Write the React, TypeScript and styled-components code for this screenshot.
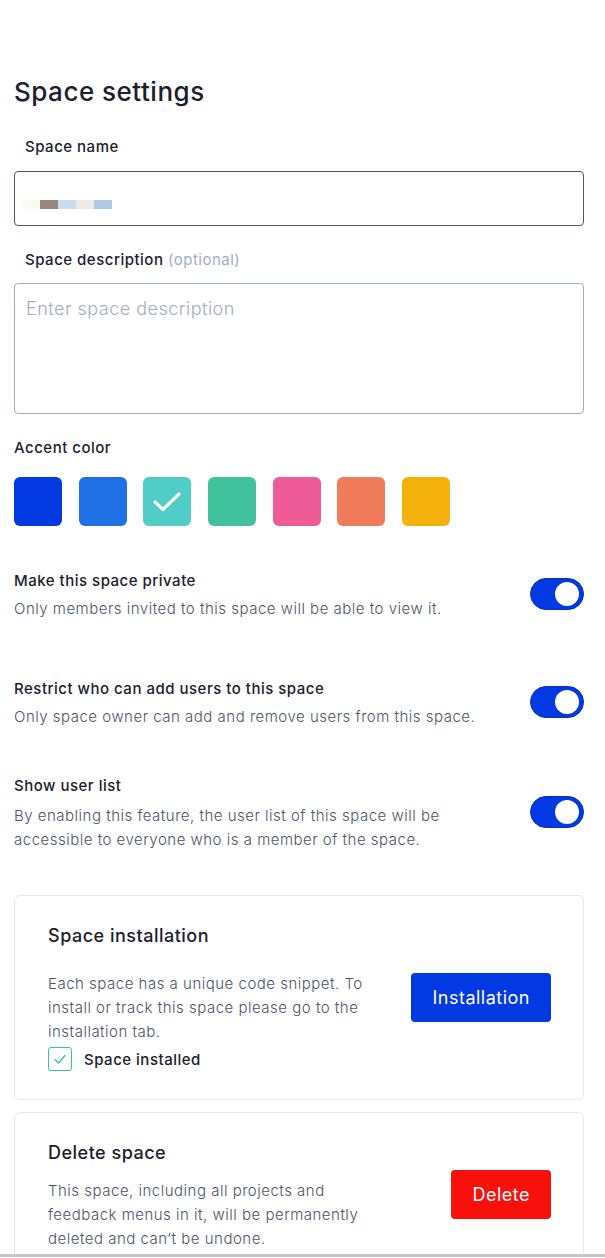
import React from "react";
import styled, { createGlobalStyle } from "styled-components";

const GlobalStyle = createGlobalStyle`
  html, body {
    margin: 0;
    padding: 0;
    background: #fff;
  }
  body {
    font-family: Inter, "Noto Sans", "Liberation Sans", sans-serif;
    color: #1a202c;
    letter-spacing: 0.5px;
  }
  * {
    box-sizing: border-box;
  }
`;

const Page = styled.div`
  display: flex;
  flex-direction: column;
  padding: 76px 21px 0 14px;
`;

const PageTitle = styled.h1`
  margin: 0;
  font-size: 26px;
  line-height: 31px;
  font-weight: 500;
  color: #1a202c;
`;

const Label = styled.div<{ $top: number; $indent?: boolean }>`
  margin-top: ${({ $top }) => $top}px;
  padding-left: ${({ $indent }) => ($indent ? "11px" : "0")};
  font-size: 15px;
  line-height: 20px;
  font-weight: 500;
  color: #1a202c;
`;

const Optional = styled.span`
  font-weight: 400;
  color: #a0aec0;
`;

const NameBox = styled.div`
  margin-top: 14px;
  height: 55px;
  border: 1px solid #4a5568;
  border-radius: 4px;
  display: flex;
  align-items: center;
  padding: 0 0 0 7px;
`;

const Blurred = styled.div`
  display: flex;
  margin-top: 12px;
`;

const Pixel = styled.span<{ $c: string }>`
  width: 18px;
  height: 9px;
  background: ${({ $c }) => $c};
`;

const DescBox = styled.div`
  margin-top: 13px;
  height: 131px;
  border: 1px solid #a0aec0;
  border-radius: 4px;
  padding: 14px 11px;
  font-size: 18px;
  line-height: 22px;
  font-weight: 300;
  color: #a0aec0;
`;

const Swatches = styled.div`
  margin-top: 19px;
  display: flex;
  gap: 16.7px;
`;

const Swatch = styled.div<{ $c: string }>`
  width: 48px;
  height: 49px;
  border-radius: 6px;
  background: ${({ $c }) => $c};
  display: flex;
  align-items: center;
  justify-content: center;
`;

const ToggleRow = styled.div<{ $top: number }>`
  margin-top: ${({ $top }) => $top}px;
  display: flex;
  align-items: center;
  justify-content: space-between;
  gap: 20px;
`;

const ToggleText = styled.div<{ $gap: number }>`
  display: flex;
  flex-direction: column;
  gap: ${({ $gap }) => $gap}px;
  max-width: 480px;
`;

const RowTitle = styled.div`
  font-size: 15px;
  line-height: 20px;
  font-weight: 500;
  color: #1a202c;
`;

const RowDesc = styled.div`
  font-size: 15px;
  line-height: 24px;
  font-weight: 300;
  color: #4a5568;
`;

const Toggle = styled.div`
  position: relative;
  flex: none;
  width: 54px;
  height: 32px;
  border-radius: 16px;
  background: #0339e3;
  border: 1px solid #0632c4;
  margin-top: -4px;
`;

const Knob = styled.span`
  position: absolute;
  top: 3px;
  right: 4px;
  width: 24px;
  height: 24px;
  border-radius: 50%;
  background: #fff;
`;

const Card = styled.div<{ $top: number }>`
  margin-top: ${({ $top }) => $top}px;
  border: 1px solid #e2e8f0;
  border-radius: 6px;
  padding: 28px 32px 28px 33px;
  display: flex;
  align-items: center;
  justify-content: space-between;
`;

const CardBody = styled.div`
  display: flex;
  flex-direction: column;
`;

const CardTitle = styled.div`
  font-size: 18px;
  line-height: 24px;
  font-weight: 500;
  color: #1a202c;
`;

const CardDesc = styled.div<{ $top: number }>`
  margin-top: ${({ $top }) => $top}px;
  max-width: 330px;
  font-size: 15px;
  line-height: 24px;
  font-weight: 300;
  color: #4a5568;
`;

const CheckRow = styled.div`
  margin-top: 3px;
  display: flex;
  align-items: center;
  gap: 12px;
  font-size: 15px;
  font-weight: 500;
  color: #1a202c;
`;

const CheckBox = styled.div`
  width: 24px;
  height: 24px;
  border: 1px solid #3cc39b;
  border-radius: 3px;
  display: flex;
  align-items: center;
  justify-content: center;
`;

const ActionButton = styled.button<{ $bg: string; $shift?: number }>`
  flex: none;
  height: 49px;
  padding: 0 21px;
  margin-top: ${({ $shift }) => ($shift ? `${$shift}px` : "0")};
  border: none;
  border-radius: 4px;
  background: ${({ $bg }) => $bg};
  color: #fff;
  font-family: inherit;
  letter-spacing: 0.5px;
  font-size: 18px;
  font-weight: 400;
  cursor: pointer;
`;

const BottomEdge = styled.div`
  position: fixed;
  left: 0;
  right: 0;
  bottom: 0;
  height: 4px;
  background: #fff;
  border-top: 3px solid #c3c8d0;
`;

const accentColors = ["#0339e3", "#1f6fe5", "#4fcdc6", "#40c39c", "#ef5b96", "#f07c5b", "#f4b10b"];
const blurColors = ["#fdf9f0", "#9a877b", "#c6def0", "#ecebe8", "#aecbe5"];

const toggles = [
  { top: 45, gap: 6, title: "Make this space private", desc: "Only members invited to this space will be able to view it." },
  { top: 58, gap: 6, title: "Restrict who can add users to this space", desc: "Only space owner can add and remove users from this space." },
  {
    top: 47,
    gap: 8,
    title: "Show user list",
    desc: "By enabling this feature, the user list of this space will be accessible to everyone who is a member of the space.",
  },
];

const App = () => {
  return (
    <>
      <GlobalStyle />
      <Page>
        <PageTitle>Space settings</PageTitle>

        <Label $top={30} $indent>Space name</Label>
        <NameBox>
          <Blurred>
            {blurColors.map((c) => (
              <Pixel key={c} $c={c} />
            ))}
          </Blurred>
        </NameBox>

        <Label $top={24} $indent>
          Space description <Optional>(optional)</Optional>
        </Label>
        <DescBox>Enter space description</DescBox>

        <Label $top={24}>Accent color</Label>
        <Swatches>
          {accentColors.map((c, i) => (
            <Swatch key={c} $c={c}>
              {i === 2 && (
                <svg width="48" height="48" viewBox="0 0 48 48" fill="none">
                  <polyline points="12,24 20,31.5 36,16" stroke="#fff" strokeWidth="3.2" strokeLinecap="round" strokeLinejoin="round" />
                </svg>
              )}
            </Swatch>
          ))}
        </Swatches>

        {toggles.map((t) => (
          <ToggleRow key={t.title} $top={t.top}>
            <ToggleText $gap={t.gap}>
              <RowTitle>{t.title}</RowTitle>
              <RowDesc>{t.desc}</RowDesc>
            </ToggleText>
            <Toggle>
              <Knob />
            </Toggle>
          </ToggleRow>
        ))}

        <Card $top={43}>
          <CardBody>
            <CardTitle>Space installation</CardTitle>
            <CardDesc $top={24}>
              Each space has a unique code snippet. To install or track this space please go to the installation tab.
            </CardDesc>
            <CheckRow>
              <CheckBox>
                <svg width="16" height="16" viewBox="0 0 16 16" fill="none">
                  <polyline points="3,8.5 6.5,12 13,4.5" stroke="#3cc39b" strokeWidth="1.4" strokeLinecap="round" strokeLinejoin="round" />
                </svg>
              </CheckBox>
              Space installed
            </CheckRow>
          </CardBody>
          <ActionButton $bg="#0339e3">Installation</ActionButton>
        </Card>

        <Card $top={12}>
          <CardBody>
            <CardTitle>Delete space</CardTitle>
            <CardDesc $top={14}>
              This space, including all projects and feedback menus in it, will be permanently deleted and can’t be undone.
            </CardDesc>
          </CardBody>
          <ActionButton $bg="#f8110c" $shift={-3}>Delete</ActionButton>
        </Card>
      </Page>
      <BottomEdge />
    </>
  );
};

export default App;
